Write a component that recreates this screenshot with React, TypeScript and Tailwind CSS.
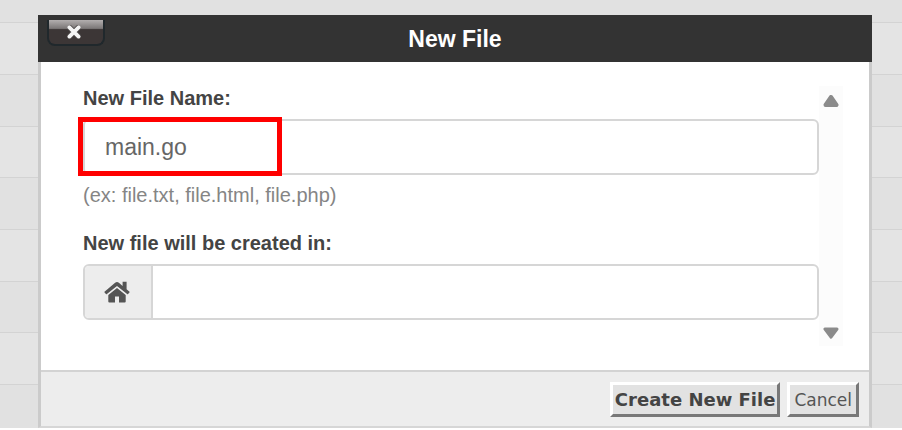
import { useState } from 'react'

const rows = [
  'h-[23px] bg-[#e1e1e1]',
  'h-[52px] bg-[#e4e4e4]',
  'h-[52px] bg-[#e1e1e1]',
  'h-[51px] bg-[#e4e4e4]',
  'h-[52px] bg-[#e1e1e1]',
  'h-[52px] bg-[#e4e4e4]',
  'h-[51px] bg-[#e1e1e1]',
  'h-[52px] bg-[#e4e4e4]',
  'h-[43px] bg-[#e1e1e1] border-b-0',
]

const FileRows = () => {
  return (
    <div className="col-start-1 row-start-1">
      {rows.map((row, i) => (
        <div key={i} className={`border-b border-[#d3d3d3] ${row}`} />
      ))}
    </div>
  )
}

const CloseButton = () => {
  return (
    <button
      type="button"
      aria-label="Close"
      className="flex h-[26px] w-[58px] justify-center rounded-b-lg border-2 border-t-0 border-[#20282c] bg-linear-to-b from-[#b3afaf] from-0% via-[#7c7878] via-35% to-[#3c3636] to-40%"
    >
      <svg viewBox="0 0 14 14" className="mt-[5px] mr-1 h-[14px] w-[14px]" fill="none">
        <path d="M2 2 12 12M12 2 2 12" stroke="#4b4747" strokeWidth="5.4" />
        <path d="M2.4 2.4 11.6 11.6M11.6 2.4 2.4 11.6" stroke="#f4f4f4" strokeWidth="3.8" strokeLinecap="round" />
      </svg>
    </button>
  )
}

const ScrollBar = () => {
  return (
    <div className="flex w-6 shrink-0 flex-col items-center justify-between bg-[#fcfcfc] pt-[9px] pb-[7px]">
      <button type="button" aria-label="Scroll up">
        <svg viewBox="0 0 16 12" className="h-3 w-4">
          <path d="M8 2 13.5 10H2.5Z" fill="#8b8b8b" stroke="#8b8b8b" strokeWidth="4" strokeLinejoin="round" />
        </svg>
      </button>
      <button type="button" aria-label="Scroll down">
        <svg viewBox="0 0 16 12" className="h-3 w-4">
          <path d="M2 2H14L8 10.2Z" fill="#8b8b8b" stroke="#8b8b8b" strokeWidth="3" strokeLinejoin="round" />
        </svg>
      </button>
    </div>
  )
}

const HomeIcon = () => {
  return (
    <svg viewBox="0 0 26 22" className="mr-[2px] h-[22px] w-[26px]" fill="#555">
      <path d="M13 7 4.3 14V20.4Q4.3 21.4 5.3 21.4H11V15.4H15V21.4H20.7Q21.7 21.4 21.7 20.4V14Z" />
      <path d="M25.8 11 22.6 8.3V.8H18.6V5L14.9 1.7Q13 .2 11.1 1.7L.2 11 1.9 13Q2.4 13.4 2.9 13L13 4.9 23.1 13Q23.6 13.4 24.1 13Z" />
    </svg>
  )
}

export default function App() {
  const [name, setName] = useState('main.go')
  const [folder, setFolder] = useState('')

  return (
    <main className="grid bg-white font-['Liberation_Sans',Arial,sans-serif] text-[#444]">
      <FileRows />

      <div role="dialog" aria-labelledby="dialog-title" className="col-start-1 row-start-1 mt-[15px] mr-[30px] ml-[38px] flex flex-col">
        {/* Title bar */}
        <header className="grid h-[47px] grid-cols-[1fr_auto_1fr] items-center bg-[#333] px-[9px]">
          <div className="self-start pt-[5px]">
            <CloseButton />
          </div>
          <h1 id="dialog-title" className="text-[23px] leading-7 font-bold text-white">New File</h1>
        </header>

        <form className="flex grow flex-col border-x-3 border-b-2 border-x-[#cbcbcb] border-b-[#d6d6d6] bg-white" onSubmit={(e) => e.preventDefault()}>
          {/* Fields */}
          <div className="flex pt-6 pr-[26px] pb-6 pl-[42px]">
            <div className="grow pb-[26px]">
              <label htmlFor="file-name" className="block text-[20px] leading-6 font-bold">New File Name:</label>
              <div className="relative mt-[9px]">
                <input
                  id="file-name"
                  type="text"
                  value={name}
                  onChange={(e) => setName(e.target.value)}
                  className="block h-[56px] w-full rounded-md border-2 border-[#d6d6d6] px-5 text-[23px] text-[#666] outline-none"
                />
                <div className="pointer-events-none absolute -top-[2px] -left-[5px] h-[59px] w-[204px] border-5 border-[#ff0000]" />
              </div>
              <p className="mt-2 text-[20px] leading-6 text-[#858585]">(ex: file.txt, file.html, file.php)</p>

              <label htmlFor="folder" className="mt-6 block text-[20px] leading-6 font-bold">New file will be created in:</label>
              <div className="mt-[9px] flex h-[56px] overflow-hidden rounded-md border-2 border-[#d6d6d6]">
                <span className="flex w-[68px] items-center justify-center border-r-2 border-[#d6d6d6] bg-[#ededed]">
                  <HomeIcon />
                </span>
                <input
                  id="folder"
                  type="text"
                  value={folder}
                  onChange={(e) => setFolder(e.target.value)}
                  className="min-w-0 grow px-5 text-[23px] text-[#666] outline-none"
                />
              </div>
            </div>
            <ScrollBar />
          </div>

          {/* Actions */}
          <footer className="flex grow items-start justify-end gap-[7px] border-t-2 border-[#d3d3d3] bg-[#ededed] pt-[10px] pr-[10px] font-['DejaVu_Sans',Verdana,sans-serif]">
            <button type="submit" className="h-[35px] border-3 border-t-white border-r-[#787878] border-b-[#787878] border-l-white bg-[#e2e2e2] px-[2px] text-[18px] leading-6 font-bold">
              Create New File
            </button>
            <button type="button" className="h-[35px] border-3 border-t-white border-r-[#787878] border-b-[#787878] border-l-white bg-[#e2e2e2] px-[4px] text-[17px] leading-6 text-[#555]">
              Cancel
            </button>
          </footer>
        </form>
      </div>
    </main>
  )
}
